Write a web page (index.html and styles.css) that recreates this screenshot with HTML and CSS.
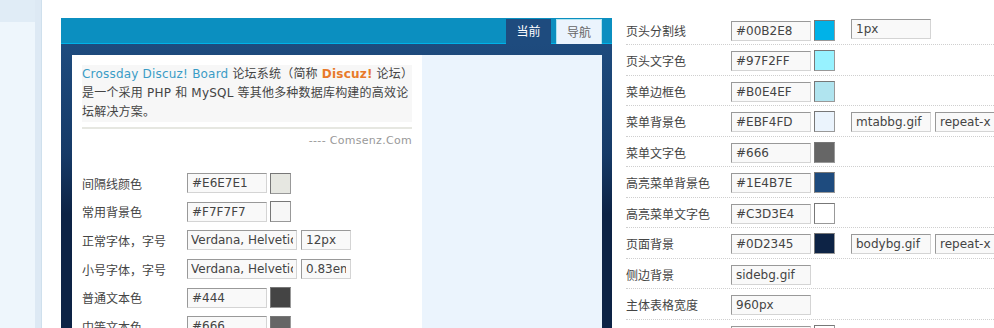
FILE: index.html
```html
<!DOCTYPE html>
<html lang="zh-CN">
<head>
<meta charset="utf-8">
<title>风格设置</title>
<link rel="stylesheet" href="styles.css">
</head>
<body>
<div class="page">
  <aside class="side"><div class="side-top"></div></aside>

  <div class="preview">
    <div class="pv-head">
      <span class="tab tab-cur">当前</span>
      <span class="tab tab-nav">导航</span>
    </div>
    <div class="pv-body">
      <div class="pv-main">
        <div class="intro">
          <span class="brand">Crossday Discuz! Board</span> 论坛系统（简称 <b class="hl">Discuz!</b> 论坛）<br>
          是一个采用 PHP 和 MySQL 等其他多种数据库构建的高效论<br>
          坛解决方案。
        </div>
        <div class="rule"></div>
        <div class="sig">---- Comsenz.Com</div>

        <div class="form">
          <div class="frow">
            <span class="flabel">间隔线颜色</span>
            <input class="inp w80" type="text" value="#E6E7E1" readonly>
            <span class="swatch" style="background:#E6E7E1"></span>
          </div>
          <div class="frow">
            <span class="flabel">常用背景色</span>
            <input class="inp w80" type="text" value="#F7F7F7" readonly>
            <span class="swatch" style="background:#F7F7F7"></span>
          </div>
          <div class="frow">
            <span class="flabel">正常字体，字号</span>
            <input class="inp w110 pad3" type="text" value="Verdana, Helvetica, Arial, sans-serif" readonly>
            <input class="inp w50 gap4" type="text" value="12px" readonly>
          </div>
          <div class="frow">
            <span class="flabel">小号字体，字号</span>
            <input class="inp w110 pad3" type="text" value="Verdana, Helvetica, Arial, sans-serif" readonly>
            <input class="inp w50 gap4" type="text" value="0.83em" readonly>
          </div>
          <div class="frow">
            <span class="flabel">普通文本色</span>
            <input class="inp w80" type="text" value="#444" readonly>
            <span class="swatch" style="background:#444"></span>
          </div>
          <div class="frow">
            <span class="flabel">中等文本色</span>
            <input class="inp w80" type="text" value="#666" readonly>
            <span class="swatch" style="background:#666"></span>
          </div>
        </div>
      </div>
      <div class="pv-menu"></div>
    </div>
  </div>

  <div class="settings">
    <div class="srow">
      <span class="slabel">页头分割线</span>
      <input class="inp w80" type="text" value="#00B2E8" readonly>
      <span class="swatch" style="background:#00B2E8"></span>
      <input class="inp w80 extra up2" type="text" value="1px" readonly>
    </div>
    <div class="srow">
      <span class="slabel">页头文字色</span>
      <input class="inp w80" type="text" value="#97F2FF" readonly>
      <span class="swatch" style="background:#97F2FF"></span>
    </div>
    <div class="srow">
      <span class="slabel">菜单边框色</span>
      <input class="inp w80" type="text" value="#B0E4EF" readonly>
      <span class="swatch" style="background:#B0E4EF"></span>
    </div>
    <div class="srow">
      <span class="slabel">菜单背景色</span>
      <input class="inp w80" type="text" value="#EBF4FD" readonly>
      <span class="swatch" style="background:#EBF4FD"></span>
      <input class="inp w80 extra" type="text" value="mtabbg.gif" readonly>
      <input class="inp w80 gap4" type="text" value="repeat-x" readonly>
    </div>
    <div class="srow">
      <span class="slabel">菜单文字色</span>
      <input class="inp w80" type="text" value="#666" readonly>
      <span class="swatch" style="background:#666"></span>
    </div>
    <div class="srow">
      <span class="slabel">高亮菜单背景色</span>
      <input class="inp w80" type="text" value="#1E4B7E" readonly>
      <span class="swatch" style="background:#1E4B7E"></span>
    </div>
    <div class="srow">
      <span class="slabel">高亮菜单文字色</span>
      <input class="inp w80" type="text" value="#C3D3E4" readonly>
      <span class="swatch" style="background:#FFFFFF"></span>
    </div>
    <div class="srow">
      <span class="slabel">页面背景</span>
      <input class="inp w80" type="text" value="#0D2345" readonly>
      <span class="swatch" style="background:#0D2345"></span>
      <input class="inp w80 extra" type="text" value="bodybg.gif" readonly>
      <input class="inp w80 gap4" type="text" value="repeat-x" readonly>
    </div>
    <div class="srow">
      <span class="slabel">侧边背景</span>
      <input class="inp w80" type="text" value="sidebg.gif" readonly>
    </div>
    <div class="srow">
      <span class="slabel">主体表格宽度</span>
      <input class="inp w80" type="text" value="960px" readonly>
    </div>
    <div class="srow">
      <span class="slabel">主体表格背景色</span>
      <input class="inp w80" type="text" value="#FFF" readonly>
      <span class="swatch" style="background:#FFFFFF"></span>
    </div>
  </div>
</div>
</body>
</html>
```
FILE: styles.css
```css
html, body {
  margin: 0;
  padding: 0;
  overflow: hidden;
  background: #fff;
}

body {
  font-family: "DejaVu Sans", Verdana, "Noto Sans CJK SC", sans-serif;
  font-size: 12px;
  color: #444;
}

.page {
  display: flex;
  align-items: flex-start;
  height: 328px;
  width: 1100px;
}

/* left sidebar strip */
.side {
  flex: 0 0 35px;
  height: 328px;
  background: #eef6fc;
  border-right: 6px solid #dde9f4;
  box-shadow: 1px 0 0 #cfe0ed;
}
.side-top {
  height: 22px;
  background: #e0ecf6;
}

/* preview box */
.preview {
  flex: 0 0 551px;
  margin-left: 20px;
  margin-top: 18px;
}

.pv-head {
  height: 25px;
  background: #0b8fc0;
  border-bottom: 1px solid #00B2E8;
  display: flex;
  justify-content: flex-end;
  align-items: flex-end;
  gap: 5px;
  padding-right: 10px;
}

.tab {
  box-sizing: border-box;
  height: 25px;
  margin-bottom: -1px;
  line-height: 24px;
  text-align: center;
  font-size: 12px;
  font-family: "Noto Sans CJK SC", sans-serif;
}
.tab-cur {
  width: 45px;
  background: #1E4B7E;
  color: #ffffff;
}
.tab-nav {
  width: 46px;
  height: 25px;
  background: #EBF4FD;
  color: #666;
  border: 1px solid #B0E4EF;
  border-bottom: none;
  line-height: 23px;
}

.pv-body {
  display: flex;
  height: 300px;
  padding: 11px 10px 0 11px;
  background: linear-gradient(#1E4B7E 0, #163a67 110px, #0D2345 170px, #0D2345 100%);
}

.pv-main {
  box-sizing: border-box;
  width: 350px;
  background: #fff;
  padding: 10px;
}

.pv-menu {
  width: 180px;
  background: #EBF4FD;
}

.intro {
  background: #f7f7f7;
  line-height: 19px;
  height: 57px;
  white-space: nowrap;
  letter-spacing: 0.2px;
}
.brand {
  color: #3a9cc6;
}
.hl {
  color: #e87a2a;
}

.rule {
  margin-top: 5px;
  height: 2px;
  background: #e6e7e1;
}

.sig {
  margin-top: 4px;
  line-height: 16px;
  text-align: right;
  font-size: 11px;
  color: #999;
  letter-spacing: 0.3px;
}

.form {
  margin-top: 20px;
}

.frow {
  display: flex;
  align-items: center;
  height: 28.6px;
}

.flabel {
  flex: 0 0 105px;
  font-family: "Noto Sans CJK SC", sans-serif;
  color: #444;
}

/* inputs and swatches */
.inp {
  box-sizing: border-box;
  height: 20px;
  margin: 0;
  padding: 0 4px;
  border: 1px solid;
  border-color: #999 #d4d4d4 #d4d4d4 #999;
  background: #f9f9f9;
  font-family: "DejaVu Sans", Verdana, sans-serif;
  font-size: 12px;
  color: #444;
  outline: none;
}
.w80 { width: 80px; }
.w110 { width: 110px; }
.w50 { width: 50px; }
.pad3 { padding: 0 3px; }
.gap4 { margin-left: 4px; }
.extra { margin-left: 16px; }
.up2 { position: relative; top: -2px; }

.swatch {
  box-sizing: border-box;
  width: 21px;
  height: 21px;
  margin-left: 3px;
  border: 1px solid;
  border-color: #777 #999 #999 #777;
}

/* right settings panel */
.settings {
  flex: 0 0 420px;
  padding-top: 14.5px;
  padding-left: 14px;
}

.srow {
  display: flex;
  align-items: flex-start;
  padding: 6px 0 3.5px;
  border-bottom: 1px dotted #cfcfcf;
  height: 20px;
}
.srow .swatch {
  margin-top: -1px;
}

.slabel {
  flex: 0 0 105px;
  line-height: 20px;
  font-family: "Noto Sans CJK SC", sans-serif;
  color: #444;
}
```
